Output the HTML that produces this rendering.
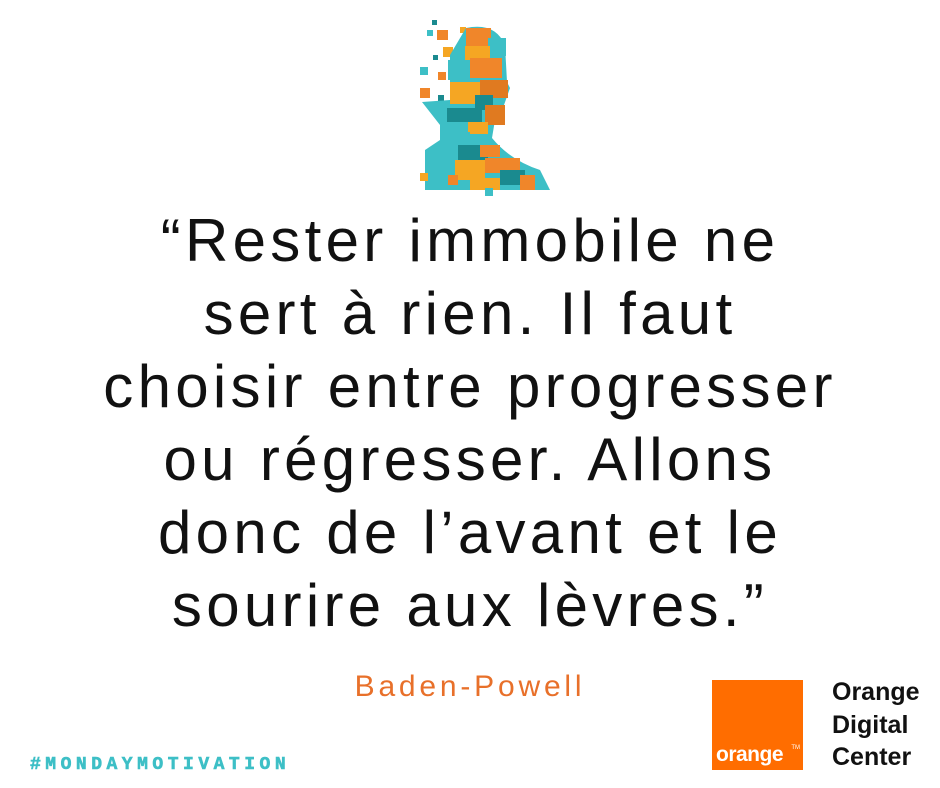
<!DOCTYPE html>
<html><head><meta charset="utf-8"><style>
body{margin:0;width:940px;height:788px;background:#fff;position:relative;overflow:hidden;font-family:"Liberation Sans",sans-serif}
.q{position:absolute;left:0;width:940px;top:204px;text-align:center;font-size:60px;line-height:73px;letter-spacing:4.3px;color:#111}
.a{position:absolute;left:0;width:940px;top:670px;text-align:center;font-size:30px;letter-spacing:3.8px;color:#e8702a}
.h{position:absolute;left:30px;top:755px;font:bold 18px "Liberation Mono",monospace;letter-spacing:4.5px;color:#3dbfc6;-webkit-text-stroke:0.6px #3dbfc6}
.o{position:absolute;left:712px;top:680px;width:91px;height:90px;background:#ff6d00}
.o span{position:absolute;left:4px;bottom:3px;color:#fff;font-weight:bold;font-size:21px;letter-spacing:-0.5px}
.o sup{position:absolute;right:3px;bottom:19px;color:#fff;font-size:6px}
.odc{position:absolute;left:832px;top:676px;font-weight:bold;font-size:25px;line-height:32.5px;color:#111}
</style></head><body>
<svg style="position:absolute;left:400px;top:10px" width="160" height="190" viewBox="0 0 160 190">
<g>
<rect x="32" y="10" width="5" height="5" fill="#1a8a8f"/>
<rect x="27" y="20" width="6" height="6" fill="#3dbfc6"/>
<rect x="37" y="20" width="11" height="10" fill="#f0862a"/>
<rect x="60" y="17" width="6" height="6" fill="#f5a623"/>
<rect x="60" y="28" width="8" height="8" fill="#3dbfc6"/>
<rect x="43" y="37" width="10" height="10" fill="#f5a623"/>
<rect x="33" y="45" width="5" height="5" fill="#1a8a8f"/>
<rect x="20" y="57" width="8" height="8" fill="#3dbfc6"/>
<rect x="38" y="62" width="8" height="8" fill="#f0862a"/>
<rect x="20" y="78" width="10" height="10" fill="#f0862a"/>
<rect x="38" y="85" width="6" height="6" fill="#1a8a8f"/>
<path d="M66 18 Q95 12 105 35 L107 72 L110 78 L104 95 L95 110 L92 128 Q110 150 140 160 L150 180 L25 180 L25 140 L40 130 L40 115 L22 92 L50 90 L50 45 Z" fill="#3dbfc6"/>
<rect x="66" y="18" width="25" height="18" fill="#f0862a"/>
<rect x="88" y="28" width="18" height="18" fill="#3dbfc6"/>
<rect x="65" y="36" width="25" height="14" fill="#f5a623"/>
<rect x="70" y="48" width="32" height="20" fill="#f0862a"/>
<rect x="48" y="50" width="22" height="20" fill="#3dbfc6"/>
<rect x="50" y="72" width="30" height="22" fill="#f5a623"/>
<rect x="80" y="70" width="28" height="18" fill="#e07a20"/>
<rect x="75" y="85" width="18" height="15" fill="#1a8a8f"/>
<rect x="47" y="98" width="35" height="14" fill="#1a8a8f"/>
<rect x="85" y="95" width="20" height="20" fill="#e07a20"/>
<rect x="68" y="112" width="20" height="12" fill="#f5a623"/>
<rect x="50" y="122" width="20" height="15" fill="#3dbfc6"/>
<rect x="58" y="135" width="30" height="15" fill="#1a8a8f"/>
<rect x="80" y="135" width="20" height="12" fill="#f0862a"/>
<rect x="55" y="150" width="30" height="20" fill="#f5a623"/>
<rect x="85" y="148" width="35" height="15" fill="#f0862a"/>
<rect x="100" y="160" width="25" height="15" fill="#1a8a8f"/>
<rect x="70" y="168" width="30" height="12" fill="#f5a623"/>
<rect x="120" y="165" width="15" height="15" fill="#f0862a"/>
<rect x="20" y="163" width="8" height="8" fill="#f5a623"/>
<rect x="48" y="165" width="10" height="10" fill="#f0862a"/>
<rect x="85" y="178" width="8" height="8" fill="#3dbfc6"/>
</g></svg>
<div class="q">“Rester immobile ne<br>sert à rien. Il faut<br>choisir entre progresser<br>ou régresser. Allons<br>donc de l’avant et le<br>sourire aux lèvres.”</div>
<div class="a">Baden-Powell</div>
<div class="h">#MONDAYMOTIVATION</div>
<div class="o"><span>orange</span><sup>TM</sup></div>
<div class="odc">Orange<br>Digital<br>Center</div>
</body></html>
